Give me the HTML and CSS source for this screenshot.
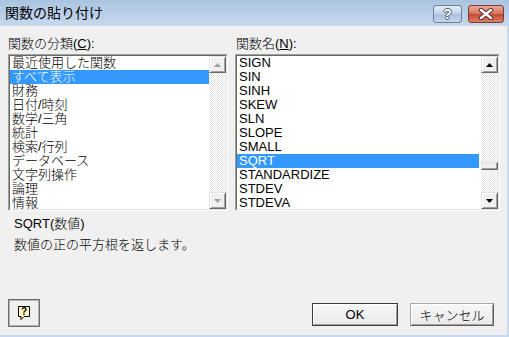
FILE: index.html
```html
<!DOCTYPE html>
<html lang="ja">

<head>
	<meta charset="UTF-8">
	<title>関数の貼り付け</title>
	<link rel="stylesheet" href="styles.css">
</head>

<body>
	<div class="titlebar">
		<span class="title">関数の貼り付け</span>
		<div class="caps">
			<span class="cap cap-help">?</span>
			<span class="cap cap-close">
				<svg width="16" height="12" viewBox="0 0 16 12">
					<path d="M3 2 L13 10 M13 2 L3 10" stroke="#5b2a22" stroke-width="4.4" stroke-linecap="round" />
					<path d="M3 2 L13 10 M13 2 L3 10" stroke="#fff" stroke-width="2.4" stroke-linecap="round" />
				</svg>
			</span>
		</div>
	</div>

	<div class="body">
		<div class="lists">
			<div class="col col-left">
				<div class="label">関数の分類(<u>C</u>):</div>
				<div class="listbox">
					<div class="listbox-in">
						<ul class="jp">
							<li>最近使用した関数</li>
							<li class="sel">すべて表示</li>
							<li>財務</li>
							<li>日付/時刻</li>
							<li>数学/三角</li>
							<li>統計</li>
							<li>検索/行列</li>
							<li>データベース</li>
							<li>文字列操作</li>
							<li>論理</li>
							<li>情報</li>
						</ul>
						<div class="scrollbar off">
							<div class="sb-btn"><svg width="7" height="4" viewBox="0 0 7 4"><polygon points="3.5,0 7,4 0,4" /></svg></div>
							<div class="sb-track"></div>
							<div class="sb-btn"><svg width="7" height="4" viewBox="0 0 7 4"><polygon points="0,0 7,0 3.5,4" /></svg></div>
						</div>
					</div>
				</div>
			</div>

			<div class="col col-right">
				<div class="label">関数名(<u>N</u>):</div>
				<div class="listbox">
					<div class="listbox-in">
						<ul>
							<li>SIGN</li>
							<li>SIN</li>
							<li>SINH</li>
							<li>SKEW</li>
							<li>SLN</li>
							<li>SLOPE</li>
							<li>SMALL</li>
							<li class="sel">SQRT</li>
							<li>STANDARDIZE</li>
							<li>STDEV</li>
							<li>STDEVA</li>
						</ul>
						<div class="scrollbar">
							<div class="sb-btn"><svg width="7" height="4" viewBox="0 0 7 4"><polygon points="3.5,0 7,4 0,4" /></svg></div>
							<div class="sb-track"><div class="sb-thumb"></div></div>
							<div class="sb-btn"><svg width="7" height="4" viewBox="0 0 7 4"><polygon points="0,0 7,0 3.5,4" /></svg></div>
						</div>
					</div>
				</div>
			</div>
		</div>

		<div class="desc">
			<p>SQRT(<span class="jp">数値</span>)</p>
			<p class="desc-text jp">数値の正の平方根を返します。</p>
		</div>

		<div class="footer">
			<button class="help-btn">
				<svg width="14" height="16" viewBox="0 0 14 16">
					<path d="M1.5 1.5 H12.5 V11.5 H7 L4 14.5 V11.5 H1.5 Z" fill="#ffffc4" stroke="#000" stroke-width="1" />
					<text x="7" y="10" text-anchor="middle" font-family="Liberation Sans" font-weight="bold" font-size="10">?</text>
				</svg>
			</button>
			<button class="btn btn-default">OK</button>
			<button class="btn jp">キャンセル</button>
		</div>
	</div>
</body>

</html>
```

FILE: styles.css
```css
* {
	margin: 0;
	padding: 0;
	box-sizing: border-box;
	list-style: none;
}

body {
	width: 509px;
	height: 337px;
	overflow: hidden;
	display: flex;
	flex-direction: column;
	background: #f0f0f0;
	color: #000;
	font-family: "Liberation Sans", "Noto Sans CJK JP", sans-serif;
	font-size: 13px;
}

/* 日本語は細めのウェイトで */
.jp {
	font-weight: 300;
}

/* タイトルバー */
.titlebar {
	height: 26px;
	display: flex;
	align-items: flex-start;
	padding: 0 5px;
	background: linear-gradient(#a9c3e0, #bcd1ea 60%, #c5d8ed);
}

.title {
	font-size: 14px;
	line-height: 26px;
}

.caps {
	margin-left: auto;
	margin-top: 5px;
	display: flex;
	gap: 6px;
}

.cap {
	height: 18px;
	border: 1px solid #6f8094;
	border-radius: 3px;
	display: flex;
	align-items: center;
	justify-content: center;
}

.cap-help {
	width: 29px;
	background: linear-gradient(#e4edf7, #c3d5ea 48%, #a9bfdc 52%, #c5d6ec);
	color: #fff;
	font-weight: bold;
	font-size: 14px;
	text-shadow: 1px 0 #4d5d72, -1px 0 #4d5d72, 0 1px #4d5d72, 0 -1px #4d5d72;
}

.cap-close {
	width: 36px;
	border-color: #7d3b2f;
	background: linear-gradient(#eaa897, #d7735e 48%, #c44a31 52%, #d9806a);
}

/* 本体 */
.body {
	flex: 1;
	padding: 11px 7px 0 8px;
	border-right: 2px solid #c5d8ed;
	border-bottom: 2px solid #c5d8ed;
}

.lists {
	display: flex;
	gap: 7px;
}

.col-left {
	width: 220px;
}

.col-right {
	width: 265px;
}

.label {
	font-weight: 300;
	line-height: 14px;
	margin-bottom: 3px;
}

.col-right .label {
	padding-left: 1px;
}

.listbox {
	height: 157px;
	border: 1px solid;
	border-color: #a0a0a0 #fff #fff #a0a0a0;
}

.listbox-in {
	height: 100%;
	display: flex;
	background: #fff;
	border: 1px solid;
	border-color: #696969 #e3e3e3 #e3e3e3 #696969;
}

.listbox ul {
	flex: 1;
	overflow: hidden;
}

.col-right ul {
	margin-right: 2px;
}

.listbox li {
	height: 14px;
	line-height: 14px;
	padding-left: 2px;
	white-space: nowrap;
}

.listbox li:last-child {
	height: 13px;
	line-height: 12px;
	padding-top: 1px;
}

.listbox li.sel {
	background: #3399ff;
	color: #fff;
}

/* スクロールバー */
.scrollbar {
	width: 17px;
	display: flex;
	flex-direction: column;
}

.sb-btn {
	height: 17px;
	display: flex;
	align-items: center;
	justify-content: center;
	background: #f0f0f0;
	border: 1px solid;
	border-color: #e3e3e3 #696969 #696969 #e3e3e3;
	box-shadow: inset 1px 1px #fff, inset -1px -1px #a0a0a0;
}

.sb-btn svg {
	fill: #000;
}

.off .sb-btn svg {
	fill: #a0a0a0;
}

.sb-track {
	flex: 1;
	background: repeating-conic-gradient(#fff 0 25%, #e6e6e6 0 50%) 0 0 / 2px 2px;
}

.sb-thumb {
	margin-top: 89px;
	height: 8px;
	background: #f0f0f0;
	border: 1px solid;
	border-color: #e3e3e3 #696969 #696969 #e3e3e3;
	box-shadow: inset -1px -1px #a0a0a0;
}

/* 説明 */
.desc {
	margin-top: 6px;
	padding-left: 6px;
	line-height: 14px;
}

.desc-text {
	margin-top: 7px;
}

/* ボタン */
.footer {
	display: flex;
	align-items: flex-start;
	margin-top: 47px;
	margin-right: 6px;
}

.help-btn {
	width: 32px;
	height: 28px;
	display: flex;
	align-items: center;
	justify-content: center;
	background: #f0f0f0;
	border: 1px solid #6e6e6e;
	box-shadow: inset 0 0 0 1px #b4b4b4;
}

.btn {
	width: 84px;
	height: 23px;
	margin-top: 4px;
	margin-left: 12px;
	font-family: "Liberation Sans", "Noto Sans CJK JP", sans-serif;
	font-size: 13px;
	color: #000;
	background: linear-gradient(#f7f7f7, #e9e9e9);
	border: 1px solid;
	border-color: #a8a8a8 #5e5e5e #5e5e5e #a8a8a8;
	box-shadow: inset 1px 1px #fff, inset -1px -1px #a0a0a0;
}

.btn.jp {
	font-weight: 300;
}

.btn-default {
	width: 86px;
	margin-left: auto;
	border-color: #3c3c3c;
}
```
